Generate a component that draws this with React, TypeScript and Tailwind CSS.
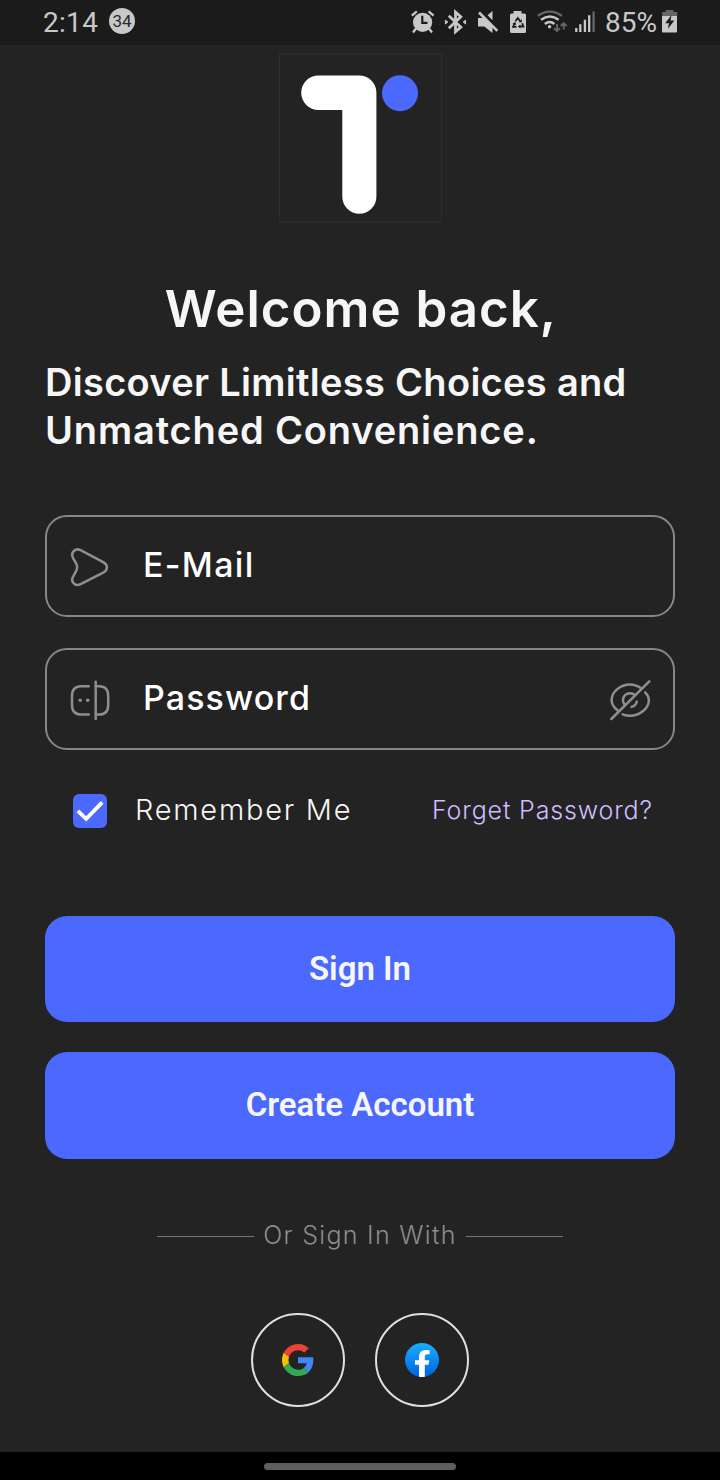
import React from "react";

const GREY = "#c8c8c8";
const DIM = "#666666";

function StatusBar() {
  return (
    <header className="flex h-[45px] w-full items-start bg-[#1b1b1b] font-['Roboto',sans-serif] text-[#c8c8c8]">
      <span className="ml-[43px] mt-[2px] w-[66px] whitespace-nowrap text-[28px] leading-[42px] tracking-[0.3px]">2:14</span>
      <span className="mt-2 flex h-[26px] w-[26px] items-center justify-center rounded-full bg-[#c8c8c8] text-[17px] leading-none text-[#2b2b2b]">
        34
      </span>
      <svg className="ml-[273px] mt-2" width="30" height="28" viewBox="408 8 30 28" fill="none" stroke={GREY}>
        <circle cx="422.6" cy="22.3" r="9.6" fill={GREY} stroke="none" />
        <path d="M411.8 15.6l5-4.2M428.6 11.4l5 4.2" strokeWidth="2.3" />
        <path d="M416 28.5l-3 4M429 28.5l3 4" strokeWidth="2.3" />
        <path d="M422.3 15.8v7h5.2" stroke="#1b1b1b" strokeWidth="2.2" />
      </svg>
      <svg className="ml-[4px] mt-2" width="28" height="28" viewBox="442 8 28 28" fill="none" stroke={GREY} strokeWidth="2.8">
        <path d="M448.8 15.8l12 11.3-5.3 4.6V12.1l5.3 4.6-12 11.6" />
        <path d="M445.4 20.2l2.4 1.8-2.4 2zM465.6 20.2l-2.4 1.8 2.4 2z" fill={GREY} strokeWidth="1" />
      </svg>
      <svg className="ml-[6px] mt-2" width="24" height="28" viewBox="476 8 24 28">
        <path d="M478 18h6l8.5 7.6V33l-8.2-6.4H478z" fill={GREY} />
        <path d="M487.5 15.2l5-4.2v9.2z" fill={GREY} />
        <path d="M479 12.5l18.3 18.3" stroke={GREY} strokeWidth="2.6" />
      </svg>
      <svg className="ml-[8px] mt-2" width="20" height="28" viewBox="508 8 20 28" fill="none">
        <path d="M513.5 11h8v2.5h3q1.5 0 1.5 1.5v16.5q0 1.5-1.5 1.5h-13q-1.5 0-1.5-1.5V15q0-1.5 1.5-1.5h2z" fill={GREY} />
        <path d="M515.3 21.2l2.5-3.2 2.3 3M522.2 23.2l1.2 3.3h-3.2M516.5 26.8h-3.4l1.4-3.4" stroke="#1b1b1b" strokeWidth="1.8" />
        <path d="M521.8 19v3.3h-3.3zM520.4 24.4v4.2l-2.5-2.1zM512.4 23.8l3-1.8.8 3.1z" fill="#1b1b1b" />
      </svg>
      <svg className="ml-[8px] mt-2" width="34" height="28" viewBox="536 8 34 28" fill="none" stroke={GREY} strokeWidth="2.4">
        <path d="M537.8 15.8q12-8.4 24 0" stroke={DIM} />
        <path d="M541 19.8q9-6.6 17.6 0" />
        <path d="M544.8 24q5-3.8 9.6 0" />
        <circle cx="549.6" cy="26.8" r="1.7" fill={GREY} stroke="none" />
        <path d="M557 24v6.5M554 28.2l3 2.8 3-2.8M563.7 29.5v-6M560.7 26l3-2.8 3 2.8" stroke={DIM} strokeWidth="1.9" />
      </svg>
      <svg className="ml-[4px] mt-2" width="22" height="28" viewBox="574 8 22 28" strokeWidth="2.3" stroke={GREY}>
        <path d="M576.3 28v4M580.3 24.3V32M584.9 19.8V32M589.2 15.3V32" />
        <path d="M593.6 11.5V32" stroke={DIM} />
      </svg>
      <span className="ml-[9px] mt-[2px] w-[55px] whitespace-nowrap text-[28px] leading-[42px]">85%</span>
      <svg className="ml-[1px] mt-2" width="18" height="28" viewBox="661 8 18 28">
        <path d="M665.7 10h7.5v2h4v4h-15v-4h3.5z" fill={DIM} />
        <path d="M662 16h15v15.5q0 1-1 1h-13q-1 0-1-1z" fill={GREY} />
        <path d="M671.5 15l-6.3 8.3h3.8l-1.2 5.7 6.5-8.4h-3.8z" fill="#1b1b1b" />
      </svg>
    </header>
  );
}

function Logo() {
  return (
    <svg className="mt-2 ml-[234px]" width="163" height="170" viewBox="279 53 163 170">
      <rect x="279.5" y="53.5" width="162" height="168" fill="none" stroke="#2d2d30" />
      <path
        d="M318.5 75.4H359.2A17.2 17.2 0 0 1 376.4 92.6V196.8A17 17 0 0 1 342.3 196.8V110H318.5A17.3 17.3 0 0 1 318.5 75.4Z"
        fill="#ffffff"
      />
      <circle cx="400" cy="93.2" r="18" fill="#4b68ff" />
    </svg>
  );
}

function SendIcon() {
  return (
    <svg className="shrink-0" width="44" height="44" viewBox="68 544 44 44" fill="none" stroke="#8e8e8e" strokeWidth="2.5" strokeLinejoin="round">
      <path d="M73 557.8C70.3 552.4 75.5 547.6 80.6 550.2L103.2 562.2C108.2 565 108.2 569.8 103.2 572.6L80.6 584.2C75.5 586.8 70.3 582.2 73 576.8L76.6 570.2Q77.9 567.3 76.6 564.4Z" />
    </svg>
  );
}

function PasswordIcon() {
  return (
    <svg className="shrink-0" width="44" height="44" viewBox="68 677 44 44" fill="none" stroke="#8e8e8e" strokeWidth="2.5" strokeLinecap="round">
      <path d="M88.7 686.2H81.5Q72 686.2 72 695.7V705Q72 714.6 81.5 714.6H88.7" />
      <path d="M95.8 686.2H99Q108.2 686.2 108.2 695.7V705Q108.2 714.6 99 714.6H95.8" />
      <path d="M95.7 681.7V719" />
      <g fill="#8e8e8e" stroke="none">
        <circle cx="80.2" cy="700.3" r="1.8" />
        <circle cx="87.7" cy="700.3" r="1.8" />
      </g>
    </svg>
  );
}

function EyeOffIcon() {
  return (
    <svg className="shrink-0" width="44" height="44" viewBox="608 677 44 44" fill="none" stroke="#8e8e8e" strokeWidth="2.5" strokeLinecap="round">
      <path d="M617.8 710.6C613.6 707.3 611.6 703.6 611.6 700C611.6 692.4 619.8 684.4 630 684.4C634.2 684.4 638.4 686 641.8 688.7" />
      <path d="M645.2 692.3C647.6 694.9 648.9 697.5 648.9 700.2C648.9 707.5 640.6 715.8 630 715.8C627.4 715.8 625 715.2 622.7 714.3" />
      <path d="M625 705.2A7 7 0 1 1 635 695.2M636.8 701.6A7 7 0 0 1 631.5 707" />
      <path d="M611.3 719L649.3 681.3" />
    </svg>
  );
}

function Field({ icon, label, trailing }: { icon: React.ReactNode; label: React.ReactNode; trailing?: React.ReactNode }) {
  return (
    <div className="flex h-[102px] w-[630px] items-center rounded-[22px] border-2 border-[#868686] pl-[21px] pr-[21px]">
      {icon}
      <span className="ml-[31px] flex-1 whitespace-nowrap pb-[2px] text-[34px] leading-[44px] font-[450] text-white">{label}</span>
      {trailing}
    </div>
  );
}

function GoogleIcon() {
  return (
    <svg width="32" height="32" viewBox="0 0 48 48">
      <path fill="#EA4335" d="M24 9.5c3.54 0 6.71 1.22 9.21 3.6l6.85-6.85C35.9 2.38 30.47 0 24 0 14.62 0 6.51 5.38 2.56 13.22l7.98 6.19C12.43 13.72 17.74 9.5 24 9.5z" />
      <path fill="#4285F4" d="M46.98 24.55c0-1.57-.15-3.09-.38-4.55H24v9.02h12.94c-.58 2.96-2.26 5.48-4.78 7.18l7.73 6c4.51-4.18 7.09-10.36 7.09-17.65z" />
      <path fill="#FBBC05" d="M10.53 28.59c-.48-1.45-.76-2.99-.76-4.59s.27-3.14.76-4.59l-7.98-6.19C.92 16.46 0 20.12 0 24c0 3.88.92 7.54 2.56 10.78l7.97-6.19z" />
      <path fill="#34A853" d="M24 48c6.48 0 11.93-2.13 15.89-5.81l-7.73-6c-2.15 1.45-4.92 2.3-8.16 2.3-6.26 0-11.57-4.22-13.47-9.91l-7.98 6.19C6.51 42.62 14.62 48 24 48z" />
    </svg>
  );
}

function FacebookIcon() {
  return (
    <svg width="34" height="34" viewBox="0 0 34 34">
      <defs>
        <linearGradient id="fb" x1="0" y1="0" x2="0" y2="1">
          <stop offset="0" stopColor="#19affe" />
          <stop offset="1" stopColor="#0062e0" />
        </linearGradient>
      </defs>
      <circle cx="17" cy="17" r="17" fill="url(#fb)" />
      <path d="M14 33.8V21.7H10V17.2H14V13.8C14 9.3 16.7 6.9 21 6.9C22.5 6.9 24.6 7.2 24.6 7.2V11.2H22.4C20.4 11.2 19.8 12.3 19.8 13.9V17.2H24.2L23.5 21.7H19.8V33.8A17 17 0 0 1 14 33.8Z" fill="#fff" />
    </svg>
  );
}

export default function App() {
  return (
    <div className="flex h-[1480px] w-[720px] flex-col overflow-hidden bg-[#232323] font-['Inter',sans-serif]">
      <StatusBar />
      <main className="flex flex-1 flex-col px-[45px]">
        <Logo />
        <h1 className="mt-[56px] pl-[2px] text-center text-[51px] leading-[60px] font-semibold tracking-[1px] whitespace-nowrap text-[#f6f6f6]">Welcome back,</h1>
        <p className="mt-[19px] flex flex-col text-[38px] leading-[48px] font-semibold whitespace-nowrap text-[#f6f6f6]">
          <span className="tracking-[0.3px]">Discover Limitless Choices and</span>
          <span className="tracking-[0.85px]">Unmatched Convenience.</span>
        </p>
        <div className="mt-[61px] flex flex-col gap-[31px]">
          <Field icon={<SendIcon />} label={<span className="tracking-[1.3px]">E-Mail</span>} />
          <Field icon={<PasswordIcon />} label={<span className="tracking-[1.1px]">Password</span>} trailing={<EyeOffIcon />} />
        </div>
        <div className="mt-[43px] flex h-[35px] items-center pl-7">
          <svg className="shrink-0" width="34" height="34" viewBox="0 0 34 34" fill="none">
            <rect width="34" height="34" rx="6" fill="#4b68ff" />
            <path d="M4.8 16.8L13.2 24.8L29.2 8.4" stroke="#fff" strokeWidth="3.8" />
          </svg>
          <span className="ml-[28px] w-[297px] pb-[2px] text-[29px] leading-[34px] font-[350] tracking-[1.75px] whitespace-nowrap text-[#f6f6f6]">Remember Me</span>
          <span className="pb-[2px] text-[25px] leading-[34px] font-[350] tracking-[0.85px] whitespace-nowrap text-[#d0bcff]">Forget Password?</span>
        </div>
        <div className="mt-[88px] flex flex-col gap-[30px] font-['Roboto',sans-serif] text-[33px] font-semibold text-[#f6f6f6]">
          <button className="h-[106px] rounded-[22px] bg-[#4b68ff] pb-px">Sign In</button>
          <button className="h-[107px] rounded-[22px] bg-[#4b68ff] pb-[2px]">Create Account</button>
        </div>
        <div className="mt-[59px] flex h-9 items-center justify-center">
          <span className="h-px w-[97px] bg-[#757575]" />
          <span className="w-[212px] pb-[2px] text-center text-[25px] leading-9 font-[350] tracking-[1.3px] whitespace-nowrap text-[#8c8c8c]">Or Sign In With</span>
          <span className="h-px w-[97px] bg-[#757575]" />
        </div>
        <div className="mt-[59px] flex justify-center gap-[30px]">
          <button className="flex h-[94px] w-[94px] items-center justify-center rounded-full border-2 border-[#e0e0e0]"><GoogleIcon /></button>
          <button className="flex h-[94px] w-[94px] items-center justify-center rounded-full border-2 border-[#e0e0e0]"><FacebookIcon /></button>
        </div>
      </main>
      <footer className="flex h-7 w-full items-center justify-center bg-black">
        <div className="h-[7px] w-[192px] rounded-full bg-[#5f5f5f]" />
      </footer>
    </div>
  );
}
